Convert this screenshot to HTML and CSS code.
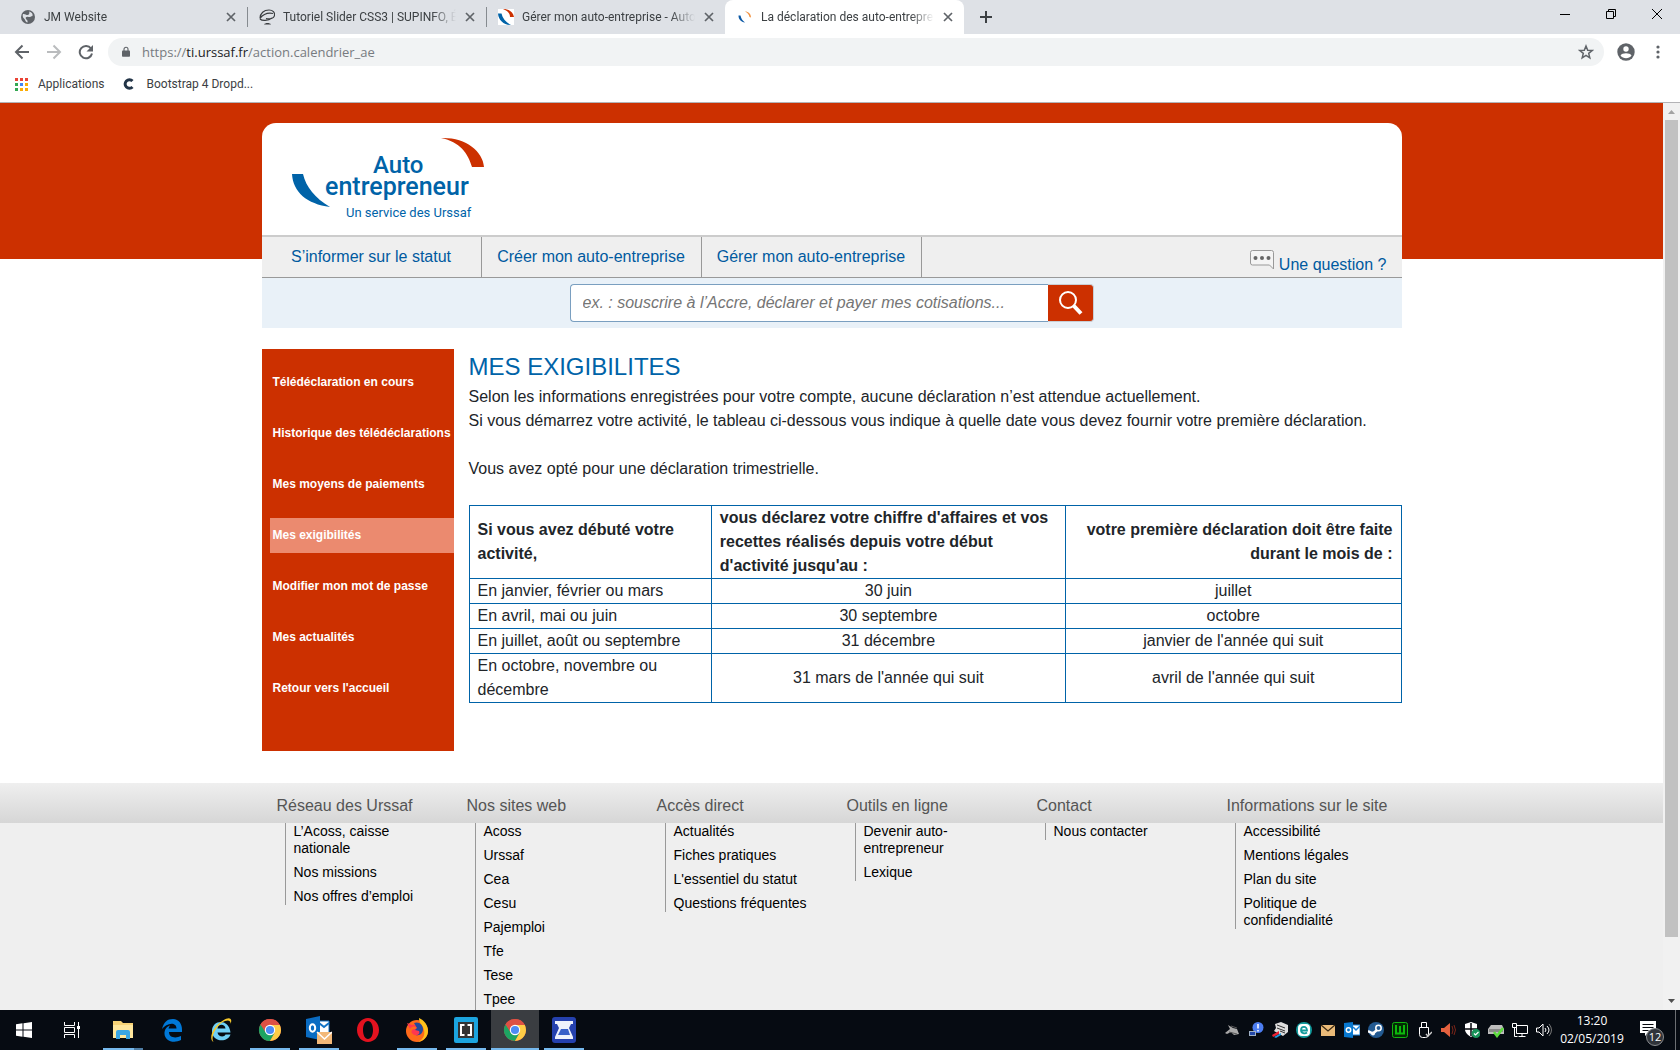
FILE: index.html
```html
<!DOCTYPE html>
<html lang="fr">
<head>
<meta charset="utf-8">
<title>La déclaration des auto-entrepreneurs</title>
<link rel="stylesheet" href="styles.css">
</head>
<body>
<svg class="defs" aria-hidden="true">
  <symbol id="i-close" viewBox="0 0 10 10"><path d="M1 1l8 8M9 1L1 9" stroke="#5f6368" stroke-width="1.7" fill="none"/></symbol>
  <symbol id="i-urssaf" viewBox="0 0 16 16"><path d="M5 0c6 0 10 3 11 8h-4C12 4.500 9.500 1.500 5 0z" fill="#cc3000"/><path d="M0 4.500h3.500C4.500 9.500 8 13.500 13 16 6 16 .5 11.500 0 4.500z" fill="#0063a8"/></symbol>
  <symbol id="i-chrome" viewBox="0 0 24 24"><circle cx="12" cy="12" r="11" fill="#dd5144"/><path d="M12 12L2.470 6.500A11 11 0 0 0 12 23l4.800-8.200z" fill="#1da462"/><path d="M12 7h9.800A11 11 0 0 1 12 23l4.500-8z" fill="#ffcd46"/><path d="M2.470 6.500A11 11 0 0 1 21.800 7H12L7.300 14z" fill="#dd5144"/><circle cx="12" cy="12" r="5.200" fill="#fff"/><circle cx="12" cy="12" r="4.100" fill="#4c8bf5"/></symbol>
</svg>

<header class="browser">
  <div class="tabstrip">
    <div class="tab">
      <svg class="favicon" viewBox="0 0 16 16"><circle cx="8" cy="8" r="7" fill="#5f6368"/><path d="M3 5c2-.5 3 1 4.500 1S10 4 9 2.500C12 3 13 5 12.500 7c-1.500 0-2 1.500-4 1S5 8.500 6 10s2 1 1.500 3.500C5 13 5.500 10.500 4 9.500S2.500 6 3 5z" fill="#dee1e6"/></svg>
      <span class="tab-title">JM Website</span>
      <button class="tab-close" aria-label="Fermer"><svg><use href="#i-close"/></svg></button>
    </div>
    <div class="tab tab-divided">
      <svg class="favicon" viewBox="0 0 16 16"><path d="M1 9.500C1 4 5 1 10 1c4 0 6 2.500 5.500 5.500C15 9.500 11 10.500 7 9.500M1 9.500c3-4 8-6 13-5M1 10c2 2 8 2 12-1" fill="none" stroke="#3a3d40" stroke-width="1.200"/><path d="M5 15.500c1-2 6-2 7 0z" fill="#3a3d40"/></svg>
      <span class="tab-title">Tutoriel Slider CSS3 | SUPINFO, Éc</span>
      <button class="tab-close" aria-label="Fermer"><svg><use href="#i-close"/></svg></button>
    </div>
    <div class="tab tab-divided">
      <svg class="favicon favicon-white"><use href="#i-urssaf"/></svg>
      <span class="tab-title">Gérer mon auto-entreprise - Auto</span>
      <button class="tab-close" aria-label="Fermer"><svg><use href="#i-close"/></svg></button>
    </div>
    <div class="tab tab-active">
      <svg class="favicon" viewBox="0 0 16 16"><path d="M8 2.500c3.500 0 6 2.500 6 6l-1.500-.5C12 5.500 10.500 3.500 8 2.500z" fill="#f29240"/><path d="M1.500 6.500h2c.5 3 2 5 4.500 7-4-.5-6.500-3-6.500-7z" fill="#0b58a5"/></svg>
      <span class="tab-title">La déclaration des auto-entrepren</span>
      <button class="tab-close" aria-label="Fermer"><svg><use href="#i-close"/></svg></button>
    </div>
    <button class="new-tab" aria-label="Nouvel onglet"><svg width="12" height="12" viewBox="0 0 12 12"><path d="M6 0v12M0 6h12" stroke="#3c4043" stroke-width="2"/></svg></button>
    <div class="window-buttons">
      <button aria-label="Réduire"><svg width="10" height="10" viewBox="0 0 10 10"><path d="M0 5.500h10" stroke="#000"/></svg></button>
      <button aria-label="Restaurer"><svg width="10" height="10" viewBox="0 0 10 10"><path d="M.5 2.500h7v7h-7zM2.500 2.500v-2h7v7h-2" stroke="#000" fill="none"/></svg></button>
      <button aria-label="Fermer la fenêtre"><svg width="10" height="10" viewBox="0 0 10 10"><path d="M0 0l10 10M10 0L0 10" stroke="#000"/></svg></button>
    </div>
  </div>

  <div class="toolbar">
    <button aria-label="Retour"><svg width="16" height="16" viewBox="0 0 16 16"><path d="M15 8H2M8.500 1.500L2 8l6.500 6.500" fill="none" stroke="#5f6368" stroke-width="2"/></svg></button>
    <button aria-label="Avancer"><svg width="16" height="16" viewBox="0 0 16 16"><path d="M1 8h13M7.500 1.500L14 8l-6.500 6.500" fill="none" stroke="#babcbe" stroke-width="2"/></svg></button>
    <button aria-label="Actualiser"><svg width="16" height="16" viewBox="0 0 16 16"><path d="M13 4.500A6.200 6.200 0 1 0 14 9.500" fill="none" stroke="#5f6368" stroke-width="2"/><path d="M15 1v6.500H8.500z" fill="#5f6368"/></svg></button>
    <div class="omnibox">
      <svg class="lock" width="8" height="12" viewBox="0 0 10 14"><path d="M1 5h8q1 0 1 1v6q0 1-1 1H1q-1 0-1-1V6q0-1 1-1z" fill="#5f6368"/><path d="M2.500 6V3.500a2.500 2.500 0 0 1 5 0V6" fill="none" stroke="#5f6368" stroke-width="1.400"/></svg>
      <span class="url">https://<b>ti.urssaf.fr</b>/action.calendrier_ae</span>
      <button aria-label="Ajouter aux favoris"><svg width="16" height="16" viewBox="0 0 16 16"><path d="M8 2l1.700 4.200 4.500.3-3.500 2.900 1.100 4.400L8 11.400l-3.800 2.400 1.100-4.400-3.500-2.900 4.500-.3z" fill="none" stroke="#5f6368" stroke-width="1.500"/></svg></button>
    </div>
    <button aria-label="Profil"><svg width="18" height="18" viewBox="0 0 18 18"><circle cx="9" cy="9" r="8.700" fill="#5f6368"/><circle cx="9" cy="6" r="2.700" fill="#fff"/><path d="M3.500 12.500c1.500-3 9.500-3 11 0-2.500 3.600-8.500 3.600-11 0z" fill="#fff"/></svg></button>
    <button aria-label="Menu"><svg width="4" height="14" viewBox="0 0 4 14"><circle cx="2" cy="2" r="1.600" fill="#5f6368"/><circle cx="2" cy="7" r="1.600" fill="#5f6368"/><circle cx="2" cy="12" r="1.600" fill="#5f6368"/></svg></button>
  </div>

  <nav class="bookmarks" aria-label="Favoris">
    <a href="#"><svg width="13" height="13" viewBox="0 0 13 13"><path d="M0 0h3v3H0zM5 0h3v3H5zM10 0h3v3h-3z" fill="#ea4335"/><path d="M0 5h3v3H0zM0 10h3v3H0z" fill="#34a853"/><path d="M5 5h3v3H5z" fill="#4285f4"/><path d="M10 5h3v3h-3zM5 10h3v3H5zM10 10h3v3h-3z" fill="#fbac05"/></svg>Applications</a>
    <a href="#"><svg width="14" height="14" viewBox="0 0 14 14"><path d="M10.500 4A4.300 4.300 0 1 0 10.500 10" fill="none" stroke="#223447" stroke-width="3"/></svg>Bootstrap 4 Dropd...</a>
  </nav>
</header>

<div class="viewport">
  <div class="page">
    <div class="container">
      <div class="banner">
        <a href="#" class="logo" aria-label="Auto entrepreneur">
          <svg width="200" height="90" viewBox="0 0 200 90">
            <path d="M149 5c24-1 42 13 43 29h-12C176 20 168 9 149 5z" fill="#cc3000"/>
            <path d="M0 41h11c3 13 12 24 27 33C15 71 1 59 0 41z" fill="#0063a8"/>
            <text x="81" y="40" class="logo-auto">Auto</text>
            <text x="33" y="62" class="logo-name">entrepreneur</text>
            <text x="54" y="84" class="logo-tag">Un service des Urssaf</text>
          </svg>
        </a>
      </div>
      <nav class="main-nav">
        <a class="nav-item" href="#">S’informer sur le statut</a>
        <a class="nav-item" href="#">Créer mon auto-entreprise</a>
        <a class="nav-item" href="#">Gérer mon auto-entreprise</a>
        <a class="nav-question" href="#"><svg width="24" height="20" viewBox="0 0 24 20"><path d="M2.500.5h19q2 0 2 2v16.500l-4-4h-17q-2 0-2-2V2.500q0-2 2-2z" fill="#f4f4f4" stroke="#999"/><circle cx="5.500" cy="8" r="2" fill="#666"/><circle cx="12" cy="8" r="2" fill="#666"/><circle cx="18.500" cy="8" r="2" fill="#666"/></svg>Une question ?</a>
      </nav>
      <form class="search">
        <input type="text" aria-label="Rechercher" placeholder="ex. : souscrire à l’Accre, déclarer et payer mes cotisations...">
        <button type="button" aria-label="Lancer la recherche"><svg width="26" height="26" viewBox="0 0 26 26"><circle cx="11" cy="10" r="8" fill="none" stroke="#fff" stroke-width="2"/><path d="M16.500 15.500l7.500 8" stroke="#fff" stroke-width="4"/></svg></button>
      </form>

      <div class="content">
        <nav class="side-menu">
          <a href="#">Télédéclaration en cours</a>
          <a href="#">Historique des télédéclarations</a>
          <a href="#">Mes moyens de paiements</a>
          <a href="#" class="current">Mes exigibilités</a>
          <a href="#">Modifier mon mot de passe</a>
          <a href="#">Mes actualités</a>
          <a href="#">Retour vers l'accueil</a>
        </nav>
        <main>
          <h1>MES EXIGIBILITES</h1>
          <p>Selon les informations enregistrées pour votre compte, aucune déclaration n’est attendue actuellement.<br>Si vous démarrez votre activité, le tableau ci-dessous vous indique à quelle date vous devez fournir votre première déclaration.</p>
          <p>Vous avez opté pour une déclaration trimestrielle.</p>
          <table>
            <colgroup><col class="col-start"><col class="col-until"><col class="col-month"></colgroup>
            <thead>
              <tr><th>Si vous avez débuté votre activité,</th><th>vous déclarez votre chiffre d'affaires et vos recettes réalisés depuis votre début d'activité jusqu'au :</th><th>votre première déclaration doit être faite durant le mois de :</th></tr>
            </thead>
            <tbody>
              <tr><td>En janvier, février ou mars</td><td>30 juin</td><td>juillet</td></tr>
              <tr><td>En avril, mai ou juin</td><td>30 septembre</td><td>octobre</td></tr>
              <tr><td>En juillet, août ou septembre</td><td>31 décembre</td><td>janvier de l'année qui suit</td></tr>
              <tr><td>En octobre, novembre ou décembre</td><td>31 mars de l'année qui suit</td><td>avril de l'année qui suit</td></tr>
            </tbody>
          </table>
        </main>
      </div>
    </div>

    <footer class="site-footer">
      <div class="container footer-cols">
        <section><h2>Réseau des Urssaf</h2><ul><li><a href="#">L’Acoss, caisse nationale</a></li><li><a href="#">Nos missions</a></li><li><a href="#">Nos offres d’emploi</a></li></ul></section>
        <section><h2>Nos sites web</h2><ul class="long-list"><li><a href="#">Acoss</a></li><li><a href="#">Urssaf</a></li><li><a href="#">Cea</a></li><li><a href="#">Cesu</a></li><li><a href="#">Pajemploi</a></li><li><a href="#">Tfe</a></li><li><a href="#">Tese</a></li><li><a href="#">Tpee</a></li></ul></section>
        <section><h2>Accès direct</h2><ul><li><a href="#">Actualités</a></li><li><a href="#">Fiches pratiques</a></li><li><a href="#">L'essentiel du statut</a></li><li><a href="#">Questions fréquentes</a></li></ul></section>
        <section><h2>Outils en ligne</h2><ul><li><a href="#">Devenir auto-entrepreneur</a></li><li><a href="#">Lexique</a></li></ul></section>
        <section><h2>Contact</h2><ul><li><a href="#">Nous contacter</a></li></ul></section>
        <section><h2>Informations sur le site</h2><ul><li><a href="#">Accessibilité</a></li><li><a href="#">Mentions légales</a></li><li><a href="#">Plan du site</a></li><li><a href="#">Politique de confidendialité</a></li></ul></section>
      </div>
    </footer>
  </div>
  <div class="scrollbar">
    <svg width="17" height="17" viewBox="0 0 17 17"><path d="M5 11h7L8.500 7z" fill="#a3a3a3"/></svg>
    <div class="track"><div class="thumb"></div></div>
    <svg width="17" height="17" viewBox="0 0 17 17"><path d="M5 6h7l-3.500 4z" fill="#505050"/></svg>
  </div>
</div>

<footer class="taskbar">
  <div class="apps">
    <button aria-label="Démarrer"><svg width="16" height="16" viewBox="0 0 16 16"><path d="M0 2.300L6.500 1.300v6.200H0zM7.500 1.200L16 0v7.500H7.500zM0 8.500h6.500v6.200L0 13.700zM7.500 8.500H16V16l-8.500-1.200z" fill="#fff"/></svg></button>
    <button aria-label="Vue des tâches"><svg width="17" height="16" viewBox="0 0 17 16"><path d="M.5 0v3.500h10V0M.5 16v-3.500h10V16M.5 5.500h10v5H.5zM14.500 0v16" fill="none" stroke="#fff"/><path d="M13 4h3v3h-3z" fill="#fff"/></svg></button>
    <span class="pinned">
    <button class="open stacked" aria-label="Explorateur"><svg width="22" height="20" viewBox="0 0 22 20"><path d="M1 1h8l2 2h10v15H1z" fill="#f7d376"/><path d="M1 5h20v13H1z" fill="#ffe79c"/><path d="M4 19v-7q0-2 2-2h10q2 0 2 2v7h-4v-4H8v4z" fill="#3aa6e4"/></svg></button>
    <button aria-label="Edge"><svg width="22" height="24" viewBox="0 0 22 24"><path d="M1 11C3 4 6 1 12 1c6 0 9 5 9 11v2H8c0 6 7 6.500 12 4v4C12 26 3 22.500 3.500 14.500 4 10 7 8 9 7.500 8 9 7.500 10.500 7.500 10.500h8C15.500 3 5 5 1 11z" fill="#0078d7"/></svg></button>
    <button aria-label="Internet Explorer"><svg width="24" height="26" viewBox="0 0 24 26"><path fill-rule="evenodd" d="M21.500 15.500H8.500c.5 4.500 7 5 8 2h5C19 26 3 25.500 3 14S20 1 21.500 15.500zM8.500 11.500h8c-.5-5-7.500-5-8 0z" fill="#6fd0f7"/><path d="M4.500 25C-1 22 4 9 14 3.500 20-.5 24 1 21.500 7 22 2 17 3 13 5.500 6 10.500 1.500 21 4.500 25z" fill="#f7c92b"/></svg></button>
    <button class="open" aria-label="Chrome"><svg width="24" height="24"><use href="#i-chrome"/></svg></button>
    <button class="open" aria-label="Outlook"><svg width="26" height="28" viewBox="0 0 26 28"><path d="M12 5h11v13H12z" fill="#fff" stroke="#1173c7"/><path d="M13 7l5 4 5-4" fill="none" stroke="#1173c7" stroke-width="2"/><path d="M0 3l14-3v24L0 21z" fill="#0a6cc2"/><ellipse cx="6.500" cy="12" rx="2.700" ry="3.700" fill="none" stroke="#fff" stroke-width="2"/><path d="M11 16h15v12H11z" fill="#f2b878"/><path d="M11 16l7.500 7 7.500-7" fill="none" stroke="#fff" stroke-width="1.500"/></svg></button>
    <button aria-label="Opera"><svg width="24" height="26" viewBox="0 0 24 26"><path fill-rule="evenodd" d="M12 1c6 0 11 5 11 12s-5 12-11 12S1 20 1 13 6 1 12 1zm0 3c-3 0-5 4-5 9s2 9 5 9 5-4 5-9-2-9-5-9z" fill="#e3121f"/></svg></button>
    <button class="open" aria-label="Firefox"><svg width="24" height="26" viewBox="0 0 24 26"><circle cx="12" cy="14" r="11" fill="#ff6a1a"/><path d="M14 1c5 2 9 7 9 13 0 5-4 10-10 11 6-3 7-8 6-12-1-5-5-6-5-12z" fill="#ffc21a"/><path d="M2 6l5 2c5-1 9 1 10 5 0 5-6 7-9 4-3-2-1-5 2-5l2-1c-3-3-6-1-7 1z" fill="#ff3750"/><path d="M9 6c5-2 9 2 9 6s-3 7-7 6c3 0 4-2 3-4l-4-1 2-2z" fill="#234b9b"/></svg></button>
    <button class="open" aria-label="Brackets"><svg width="24" height="26" viewBox="0 0 24 26"><rect width="24" height="26" rx="2" fill="#1ca5e0"/><path d="M4 5h16v16H4z" fill="#333"/><path d="M10.500 8H7v10h3.500M13.500 8H17v10h-3.500" fill="none" stroke="#fff" stroke-width="2"/></svg></button>
    <button class="open active" aria-label="Chrome, fenêtre active"><svg width="24" height="24"><use href="#i-chrome"/></svg></button>
    <button class="open" aria-label="Numérisation"><svg width="24" height="26" viewBox="0 0 24 26"><rect width="24" height="26" rx="3" fill="#2541ae"/><path d="M3 4h18v3h-2l-2 4 4 9v2H3v-2l4-9-2-4H3z" fill="#eef2fc"/><path d="M9 12h7l2 6H6z" fill="#3760c9"/></svg></button>
    </span>
  </div>
  <div class="tray">
    <svg viewBox="0 0 16 16"><path d="M1 11l5-4-2-4 5 3 4 1 2 5-5 1-3-3-4 2z" fill="#aaa"/><path d="M7 4l6 2M5 10l8 2" stroke="#555"/></svg>
    <svg viewBox="0 0 16 16"><circle cx="10" cy="5.500" r="5.500" fill="#4c7df0"/><path d="M10 2v4.500M10 8v1.500" stroke="#fff" stroke-width="1.500"/><path d="M1 9h7v5H1z" fill="#9fb0c6"/><path d="M2 10h5v3H2z" fill="#2348a8"/></svg>
    <svg viewBox="0 0 16 16"><path d="M3 2l6-2 7 3v7l-5 4-9-5 2-3z" fill="#ddd"/><path d="M5 3l8 3M5 6l8 3M8 9l5 2" stroke="#333"/><path d="M0 13l7-4v3l-6 3z" fill="#e23"/><path d="M2 15l7-4v2l-5 3z" fill="#29d"/></svg>
    <svg viewBox="0 0 16 16"><circle cx="8" cy="8" r="8" fill="#139a9c"/><rect x="2" y="2" width="12" height="12" rx="4" fill="#fff"/><path d="M5 8.500h6C11 3.500 5 4 5 8.200c0 3.300 4 3.800 6 2.300" fill="none" stroke="#139a9c" stroke-width="1.800"/></svg>
    <svg viewBox="0 0 16 16"><path d="M1 3h14v11H1z" fill="#eabb79"/><path d="M1 3l7 6 7-6" fill="none" stroke="#3c2b13" stroke-width="1.300"/></svg>
    <svg viewBox="0 0 16 16"><path d="M8 3h8v10H8z" fill="#fff" stroke="#1680d8"/><path d="M9 5l3 3 4-4" fill="none" stroke="#1680d8" stroke-width="1.500"/><path d="M0 1l9-1v16l-9-1z" fill="#0878cf"/><circle cx="4.500" cy="8" r="2.200" fill="none" stroke="#fff" stroke-width="1.500"/></svg>
    <svg viewBox="0 0 16 16"><circle cx="8" cy="8" r="8" fill="#235a91"/><circle cx="10.500" cy="6" r="2.700" fill="none" stroke="#fff" stroke-width="1.500"/><path d="M0 9l5 2.500L9 8" stroke="#fff" stroke-width="2.500" fill="none"/><circle cx="5" cy="11.500" r="2" fill="#fff"/></svg>
    <svg viewBox="0 0 16 16"><rect x=".5" y=".5" width="15" height="15" rx="2" fill="#032b03" stroke="#12b512"/><path d="M4 3v8.500h8V3M8 4v8" fill="none" stroke="#0cba0c" stroke-width="2"/></svg>
    <svg viewBox="0 0 16 16"><path d="M5.500 5V.5h5V5M3.500 5.500h9v7q0 3-3 3h-3q-3 0-3-3z" fill="none" stroke="#fff"/><path d="M10 12l2 2 4-4" fill="none" stroke="#ccc" stroke-width="1.500"/></svg>
    <svg viewBox="0 0 16 16"><path d="M1 6h3l6-5v14L4 10H1z" fill="#e4623f"/><path d="M12 4q2 4 0 8M14 3q3 5 0 10" fill="none" stroke="#7c2619"/></svg>
    <svg viewBox="0 0 16 16"><path d="M7 0l6 2v5c0 4-3 6-6 8-3-2-6-4-6-8V2z" fill="#fff"/><path d="M7 1v13M1 7h12" stroke="#06090e" stroke-width="1.500"/><circle cx="12" cy="11.500" r="4.500" fill="#18945a"/><path d="M10 11.500l1.500 1.500 3-3" fill="none" stroke="#fff" stroke-width="1.200"/></svg>
    <svg viewBox="0 0 16 16"><path d="M3 3h11l2 4v5H0V7z" fill="#bdbdbd"/><path d="M1 7h14v3H1z" fill="#888"/><path d="M6 10l3 4 6-8" fill="none" stroke="#5bdc3c" stroke-width="2.500"/></svg>
    <svg viewBox="0 0 16 16"><path d="M4.500 3.500h11v8h-11zM10 11.500v3M6.500 14.500h7M2.500 6v8.500h3M.5 1.500h4v4h-4z" fill="none" stroke="#fff"/></svg>
    <svg viewBox="0 0 16 16"><path d="M.5 6H3l4-4v12l-4-4H.5z" fill="none" stroke="#fff"/><path d="M9 6q2 2 0 4M11 4q4 4 0 8" fill="none" stroke="#fff"/><path d="M13 2q5 6 0 12" fill="none" stroke="#777"/></svg>
  </div>
  <div class="clock"><time>13:20</time><time>02/05/2019</time></div>
  <button class="notifications" aria-label="Notifications"><svg width="16" height="16" viewBox="0 0 16 16"><path d="M0 0h16v12H8l-3 3v-3H0z" fill="#fff"/><path d="M2.500 3.500h11M2.500 6.500h11M2.500 9.500h6" stroke="#06090e"/></svg><span class="badge">12</span></button>
  <span class="show-desktop"></span>
</footer>
</body>
</html>
```

FILE: styles.css
```css
* { box-sizing: border-box; }
body { margin: 0; height: 100vh; display: flex; flex-direction: column; overflow: hidden; font: 16px/24px "Liberation Sans", Arial, sans-serif; color: #212529; background: #fff; }
a { color: inherit; text-decoration: none; }
button { border: 0; padding: 0; background: none; color: inherit; display: flex; align-items: center; justify-content: center; font: inherit; }
svg { flex: none; display: block; }
.defs { position: absolute; width: 0; height: 0; }

/* Browser chrome */
.browser { flex: none; font: 12px/16px Roboto, "Segoe UI", sans-serif; color: #3c4043; border-bottom: 1px solid #b3b3b6; }
.tabstrip { display: flex; height: 34px; background: #dee1e6; }
.tab { display: flex; align-items: center; flex: 0 1 239px; min-width: 0; padding: 0 8px 0 20px; position: relative; }
.tab:first-child { flex-basis: 247px; }
.tab-divided::before { content: ""; position: absolute; left: 0; top: 7px; height: 20px; width: 1px; background: #868b90; }
.tab-divided, .tab-active { padding-left: 12px; }
.tab-active { background: #fff; border-radius: 8px 8px 0 0; }
.favicon { width: 16px; height: 16px; margin-right: 8px; }
.favicon-white { background: #fff; }
.tab-title { flex: 1; min-width: 0; overflow: hidden; white-space: nowrap; margin-right: 6px; -webkit-mask-image: linear-gradient(to left, transparent, #000 24px); mask-image: linear-gradient(to left, transparent, #000 24px); }
.tab-close { width: 16px; height: 16px; }
.tab-close svg { width: 10px; height: 10px; }
.new-tab { width: 44px; }
.window-buttons { display: flex; margin-left: auto; height: 28px; }
.window-buttons button { width: 46px; }
.toolbar { display: flex; align-items: center; height: 36px; padding: 0 6px; }
.toolbar > button { width: 32px; height: 28px; }
.omnibox { flex: 1; display: flex; align-items: center; height: 28px; margin: 0 6px; padding: 0 10px 0 14px; border-radius: 14px; background: #f1f3f4; }
.lock { margin-right: 12px; }
.url { flex: 1; font-family: "Open Sans", "Segoe UI", sans-serif; font-size: 13px; color: #777b80; }
.url b { font-weight: 400; color: #202124; }
.bookmarks { display: flex; align-items: center; gap: 18px; height: 32px; padding: 0 15px 4px; }
.bookmarks a { display: flex; align-items: center; gap: 10px; }

/* Scrolling area */
.viewport { flex: 1; min-height: 0; display: flex; }
.page { flex: 1; min-width: 0; overflow: hidden; background: linear-gradient(#cc3000 156px, #fff 156px); padding-top: 20px; display: flex; flex-direction: column; }
.scrollbar { width: 17px; display: flex; flex-direction: column; background: #f1f1f1; }
.track { flex: 1; display: flex; flex-direction: column; padding: 0 2px 56px; }
.thumb { flex: 1; background: #c1c1c1; }
.container { width: 100%; max-width: 1140px; margin: 0 auto; }

/* Site header */
.banner { background: #fff; border-radius: 14px 14px 0 0; border-bottom: 2px solid #ccc; padding: 10px 30px 12px; }
.logo { display: inline-block; vertical-align: top; }
.logo text { fill: #0063a8; font-family: Roboto, sans-serif; }
.logo .logo-auto { font-size: 24px; font-weight: 500; }
.logo .logo-name { font-size: 25px; font-weight: 500; }
.logo .logo-tag { font-size: 13px; }
.main-nav { display: flex; height: 41px; background: #efefef; border-bottom: 1px solid #999; color: #005a9f; }
.nav-item { flex: 0 1 220px; border-right: 1px solid #999; display: flex; align-items: center; justify-content: center; }
.nav-question { display: flex; align-items: flex-start; gap: 5px; margin-left: auto; padding: 13px 15px 0 0; line-height: 30px; }
.search { display: flex; justify-content: center; background: #e9f1f8; padding: 6px 0; height: 50px; }
.search input { width: 478px; border: 1px solid #7a9fc0; border-right: 0; border-radius: 4px 0 0 4px; background: #fff; padding: 0 12px; font: italic 16px "Liberation Sans", Arial, sans-serif; color: #444; }
.search input::placeholder { color: #757575; opacity: 1; }
.search button { width: 46px; background: #cc3000; border: 1px solid #c9ced4; border-left: 0; border-radius: 0 4px 4px 0; }

/* Content */
.content { display: flex; gap: 15px; padding: 21px 0 32px; }
.side-menu { flex: 0 0 192px; display: flex; flex-direction: column; gap: 16px; padding: 16px 0 45px 8px; background: #cc3000; color: #fff; font-size: 12px; font-weight: 700; }
.side-menu a { line-height: 35px; padding-left: 3px; white-space: nowrap; }
.side-menu .current { background: #eb8a6f; }
main { flex: 1; min-width: 0; }
h1 { margin: 0; font-size: 24px; line-height: 36px; font-weight: 400; color: #0063a8; }
main p { margin: 0 0 24px; }
table { width: 100%; table-layout: fixed; border-collapse: collapse; }
.col-start { width: 26%; }
.col-until { width: 38%; }
th, td { border: 1px solid #0063a8; padding: 0 8px; text-align: center; }
th, td:first-child { text-align: left; }
th:last-child { text-align: right; }

/* Site footer */
.site-footer { flex: 1 0 auto; display: flex; background: linear-gradient(#efefef, #d6d6d6 40px, #efefef 40px); }
.footer-cols { display: grid; grid-template-columns: repeat(6, 1fr); }
.footer-cols section { display: flex; flex-direction: column; padding: 0 15px; min-width: 0; }
h2 { margin: 0; padding: 11px 0 5px; font-size: 16px; line-height: 24px; font-weight: 400; color: #555; white-space: nowrap; }
.footer-cols ul { list-style: none; margin: 0 4px 0 8px; padding: 0 0 0 8px; border-left: 1px solid #999; font-size: 14px; line-height: 17px; color: #000; display: grid; align-content: start; gap: 7px; }
.footer-cols .long-list { flex: 1; }

/* Windows taskbar */
.taskbar { flex: none; display: flex; height: 40px; background: #060b12; color: #fff; font: 12px/18px "Open Sans", "Segoe UI", sans-serif; }
.apps { display: flex; margin-right: auto; }
.apps button { width: 48px; height: 40px; position: relative; }
.pinned { display: flex; gap: 1px; margin-left: 3px; }
.open::after { content: ""; position: absolute; left: 4px; right: 4px; bottom: 0; height: 2px; background: #76b9ed; }
.open.stacked::after { background: linear-gradient(to right, #76b9ed 31px, #4f7ea6 31px); }
.open.active { background: #3a3d41; }
.open.active::after { left: 0; right: 0; }
.tray { display: flex; align-items: center; gap: 8px; padding: 0 4px; }
.tray svg { width: 16px; height: 16px; }
.clock { width: 72px; padding-top: 2px; text-align: center; display: flex; flex-direction: column; }
.notifications { width: 47px; position: relative; padding: 0 8px 2px 0; }
.badge { position: absolute; left: 18px; top: 18px; width: 18px; height: 18px; border-radius: 9px; border: 1px solid #8a8d90; background: #30343a; font-size: 11px; line-height: 16px; }
.show-desktop { width: 5px; border-left: 1px solid #6b6e72; }
```
